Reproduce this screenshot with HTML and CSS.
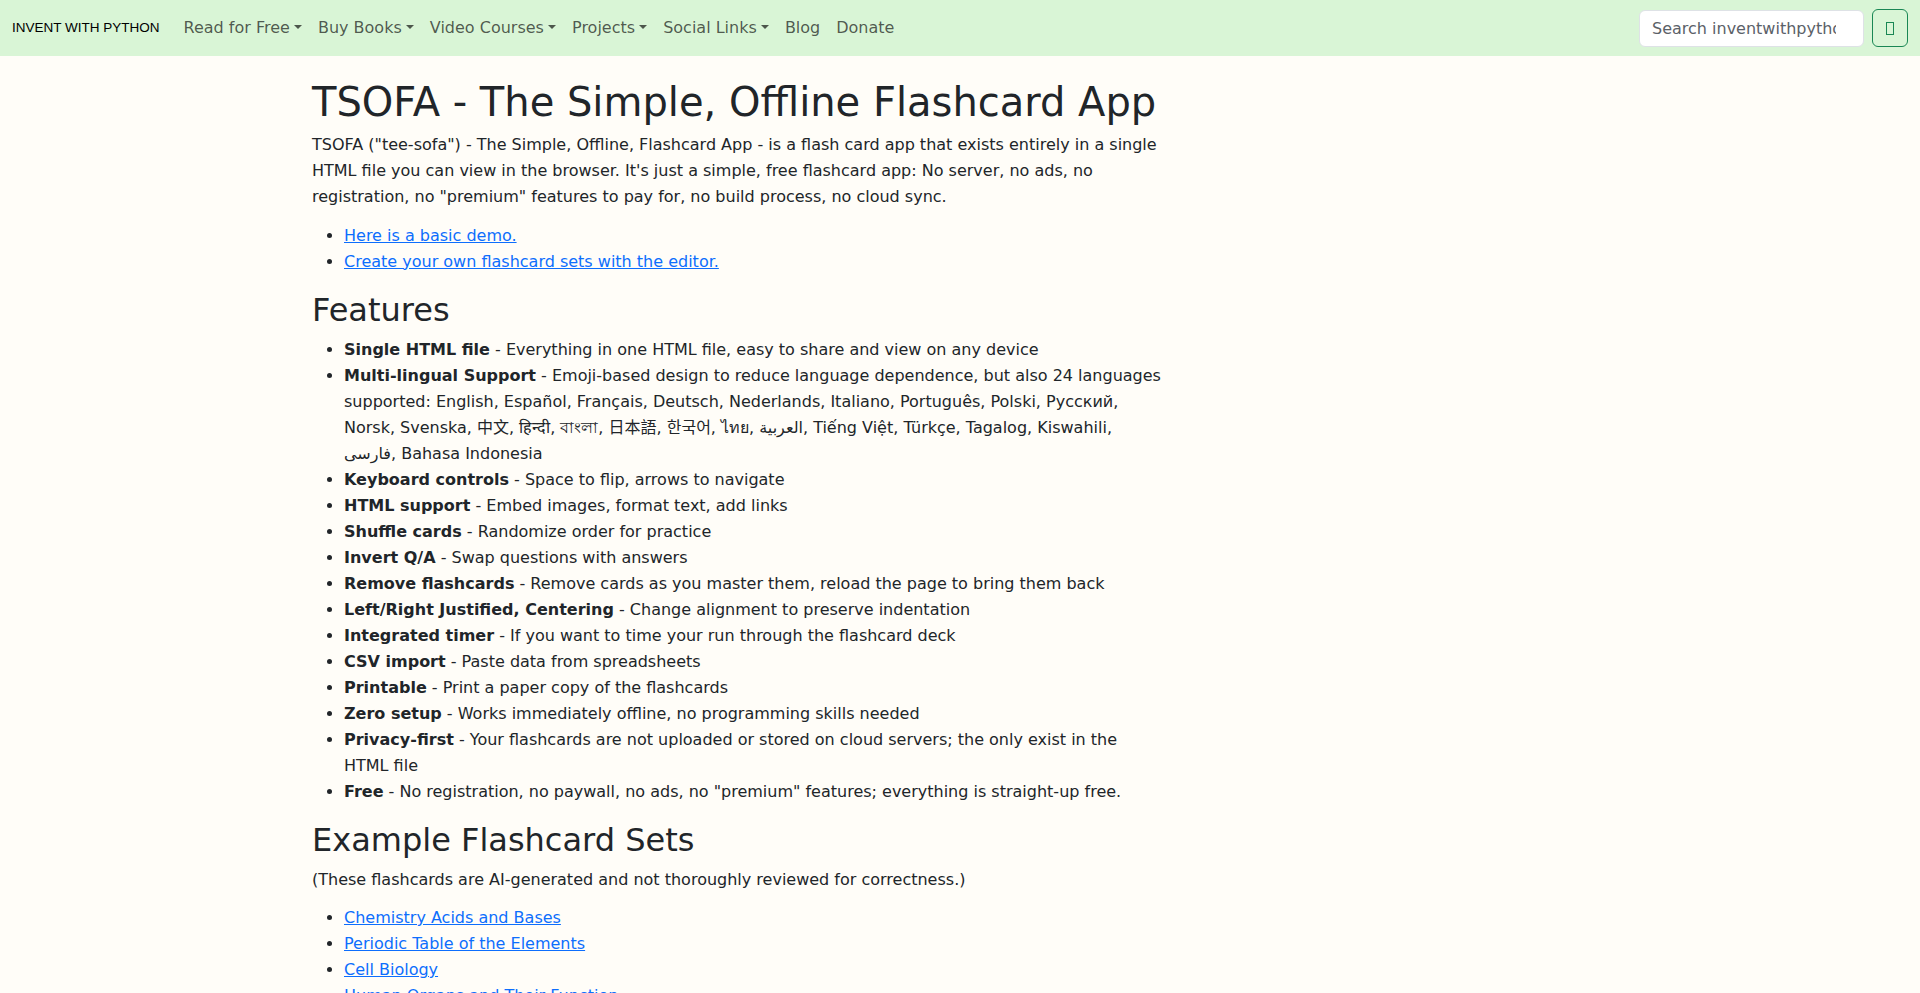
FILE: index.html
```html
<!DOCTYPE html>
<html lang="en">
<head>
<meta charset="utf-8">
<title>TSOFA - The Simple, Offline Flashcard App</title>
<link rel="stylesheet" href="styles.css">
</head>
<body>
<nav class="navbar">
  <a class="brand" href="#">INVENT WITH PYTHON</a>
  <ul class="nav-links">
    <li><a class="nav-link dropdown" href="#">Read for Free</a></li>
    <li><a class="nav-link dropdown" href="#">Buy Books</a></li>
    <li><a class="nav-link dropdown" href="#">Video Courses</a></li>
    <li><a class="nav-link dropdown" href="#">Projects</a></li>
    <li><a class="nav-link dropdown" href="#">Social Links</a></li>
    <li><a class="nav-link" href="#">Blog</a></li>
    <li><a class="nav-link" href="#">Donate</a></li>
  </ul>
  <form class="search">
    <input class="search-input" type="search" placeholder="Search inventwithpython.com">
    <button class="search-btn" type="button"><span class="tofu"></span></button>
  </form>
</nav>
<main class="container">
  <div class="content">
    <h1>TSOFA - The Simple, Offline Flashcard App</h1>
    <p>TSOFA ("tee-sofa") - The Simple, Offline, Flashcard App - is a flash card app that exists entirely in a single HTML file you can view in the browser. It's just a simple, free flashcard app: No server, no ads, no registration, no "premium" features to pay for, no build process, no cloud sync.</p>
    <ul>
      <li><a href="#">Here is a basic demo.</a></li>
      <li><a href="#">Create your own flashcard sets with the editor.</a></li>
    </ul>
    <h2>Features</h2>
    <ul>
      <li><b>Single HTML file</b> - Everything in one HTML file, easy to share and view on any device</li>
      <li><b>Multi-lingual Support</b> - Emoji-based design to reduce language dependence, but also 24 languages supported: English, Español, Français, Deutsch, Nederlands, Italiano, Português, Polski, Русский, Norsk, Svenska, 中文, हिन्दी, বাংলা, 日本語, 한국어, ไทย, العربية, Tiếng Việt, Türkçe, Tagalog, Kiswahili, فارسی, Bahasa Indonesia</li>
      <li><b>Keyboard controls</b> - Space to flip, arrows to navigate</li>
      <li><b>HTML support</b> - Embed images, format text, add links</li>
      <li><b>Shuffle cards</b> - Randomize order for practice</li>
      <li><b>Invert Q/A</b> - Swap questions with answers</li>
      <li><b>Remove flashcards</b> - Remove cards as you master them, reload the page to bring them back</li>
      <li><b>Left/Right Justified, Centering</b> - Change alignment to preserve indentation</li>
      <li><b>Integrated timer</b> - If you want to time your run through the flashcard deck</li>
      <li><b>CSV import</b> - Paste data from spreadsheets</li>
      <li><b>Printable</b> - Print a paper copy of the flashcards</li>
      <li><b>Zero setup</b> - Works immediately offline, no programming skills needed</li>
      <li><b>Privacy-first</b> - Your flashcards are not uploaded or stored on cloud servers; the only exist in the HTML file</li>
      <li><b>Free</b> - No registration, no paywall, no ads, no "premium" features; everything is straight-up free.</li>
    </ul>
    <h2>Example Flashcard Sets</h2>
    <p>(These flashcards are AI-generated and not thoroughly reviewed for correctness.)</p>
    <ul>
      <li><a href="#">Chemistry Acids and Bases</a></li>
      <li><a href="#">Periodic Table of the Elements</a></li>
      <li><a href="#">Cell Biology</a></li>
      <li><a href="#">Human Organs and Their Function</a></li>
      <li><a href="#">World Capitals</a></li>
    </ul>
  </div>
</main>
</body>
</html>
```
FILE: styles.css
```css
* { box-sizing: border-box; }
html, body { margin: 0; padding: 0; }
body {
  background: #fffdf8;
  color: #212529;
  font-family: "DejaVu Sans", "Noto Sans CJK SC", sans-serif;
  font-size: 16px;
  line-height: 26px;
}
.navbar {
  display: flex;
  align-items: center;
  height: 56px;
  padding: 0 12px;
  background: #d9f5d6;
}
.brand {
  font-family: "Liberation Sans", Arial, sans-serif;
  font-size: 13.5px;
  color: #000;
  text-decoration: none;
  margin-right: 16px;
  line-height: 20px;
}
.nav-links {
  display: flex;
  list-style: none;
  margin: 0;
  padding: 0;
  flex: 1;
}
.nav-link {
  display: block;
  padding: 8px 8px;
  line-height: 24px;
  color: rgba(0, 0, 0, 0.65);
  text-decoration: none;
}
.dropdown::after {
  content: "";
  display: inline-block;
  margin-left: 0.255em;
  vertical-align: 0.255em;
  border-top: 0.3em solid;
  border-left: 0.3em solid transparent;
  border-right: 0.3em solid transparent;
}
.search {
  display: flex;
  align-items: center;
  gap: 8px;
}
.search-input {
  width: 225px;
  height: 37px;
  padding: 6px 12px;
  font-family: "DejaVu Sans", sans-serif;
  font-size: 16px;
  color: #212529;
  background: #fff;
  border: 1px solid #dee2e6;
  border-radius: 6px;
  outline: none;
}
.search-input::placeholder { color: #5b6168; }
.search-btn {
  width: 36px;
  height: 38px;
  padding: 0;
  display: flex;
  align-items: center;
  justify-content: center;
  background: transparent;
  border: 1px solid #198754;
  border-radius: 6px;
}
.tofu {
  display: block;
  width: 8px;
  height: 13px;
  border: 1px solid #198754;
}
.container {
  width: 1320px;
  margin: 0 auto;
  padding: 22px 12px 0;
}
.content {
  width: 851px;
}
h1 {
  font-size: 40px;
  font-weight: 500;
  line-height: 48px;
  margin: 0 0 6px;
}
h2 {
  font-size: 32px;
  font-weight: 500;
  line-height: 38px;
  margin: 0 0 8px;
}
p { margin: 0 0 12.5px; }
ul { margin: 0 0 16px; padding-left: 32px; }
a { color: #0d6efd; }
b { font-weight: 700; }
```
